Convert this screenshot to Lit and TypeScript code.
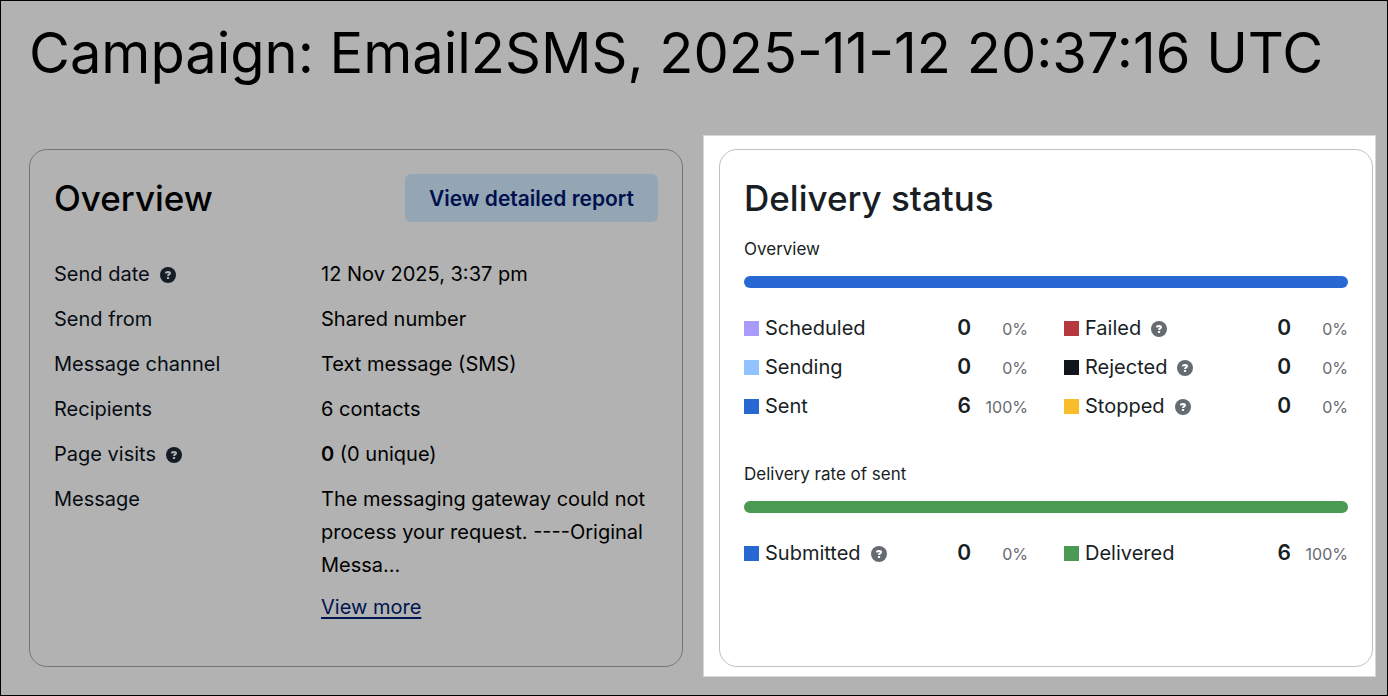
import { LitElement, html, css } from "lit";
import { customElement, property } from "lit/decorators.js";
import { styleMap } from "lit/directives/style-map.js";

interface Stat {
  label: string;
  color: string;
  count: number;
  percent: number;
  help?: string;
}

const OVERVIEW: Stat[] = [
  { label: "Scheduled", color: "#a89bfb", count: 0, percent: 0 },
  { label: "Failed", color: "#b5383e", count: 0, percent: 0, help: "About failed messages" },
  { label: "Sending", color: "#90c3ff", count: 0, percent: 0 },
  { label: "Rejected", color: "#12161c", count: 0, percent: 0, help: "About rejected messages" },
  { label: "Sent", color: "#2868d2", count: 6, percent: 100 },
  { label: "Stopped", color: "#f9bd2b", count: 0, percent: 0, help: "About stopped messages" },
];

const DELIVERY: Stat[] = [
  { label: "Submitted", color: "#2868d2", count: 0, percent: 0, help: "About submitted messages" },
  { label: "Delivered", color: "#4b9a53", count: 6, percent: 100 },
];

@customElement("help-tip")
export class HelpTip extends LitElement {
  @property() label = "Help";

  static styles = css`
    :host {
      display: inline-flex;
      color: #666b71;
    }
    .tip {
      display: flex;
      padding: 0;
      border: 0;
      background: none;
      color: inherit;
      cursor: pointer;
    }
    .mark {
      fill: none;
      stroke: var(--tip-mark, #fff);
      stroke-width: 2;
      stroke-linejoin: round;
    }
    .dot {
      fill: var(--tip-mark, #fff);
    }
  `;

  render() {
    return html`
      <button class="tip" type="button" aria-label=${this.label}>
        <svg width="16" height="16" viewBox="0 0 16 16" aria-hidden="true">
          <circle cx="8" cy="8" r="8" fill="currentColor" />
          <path class="mark" d="M5.8 6.3C5.9 5.2 6.8 4.9 8 4.9c1.2 0 2 .5 2 1.3 0 1.3-2 1.2-2 2.9" />
          <rect class="dot" x="6.9" y="10" width="2.2" height="2" rx=".4" />
        </svg>
      </button>
    `;
  }
}

@customElement("status-group")
export class StatusGroup extends LitElement {
  @property() heading = "";
  @property({ attribute: false }) stats: Stat[] = [];

  static styles = css`
    :host {
      display: block;
    }
    .heading {
      margin: 0 0 14px;
      font-size: 17px;
      font-weight: 400;
      line-height: 26px;
    }
    .bar {
      display: flex;
      height: 12px;
      overflow: hidden;
      border-radius: 6px;
      background: #e3e6e9;
    }
    .stats {
      display: grid;
      grid-template-columns: 1fr 1fr;
      column-gap: 36px;
      row-gap: 6px;
      margin: 0;
      padding: 24px 0 0;
    }
    .stat {
      display: flex;
      align-items: center;
      line-height: 33px;
    }
    .swatch {
      width: 15px;
      height: 15px;
      margin-right: 6px;
    }
    .label {
      display: flex;
      flex: 1;
      align-items: center;
    }
    .tip {
      margin-left: 10px;
    }
    .value {
      display: flex;
      align-items: baseline;
      margin: 0;
      line-height: 24px;
    }
    .count {
      font-weight: 600;
      font-size: 21px;
    }
    .percent {
      width: 57px;
      color: #666b71;
      font-size: 16px;
      text-align: right;
    }
  `;

  render() {
    return html`
      <h3 class="heading">${this.heading}</h3>
      <div class="bar">
        ${this.stats.map(
          (s) => html`<span style=${styleMap({ width: `${s.percent}%`, background: s.color })}></span>`,
        )}
      </div>
      <dl class="stats">
        ${this.stats.map(
          (s) => html`
            <div class="stat">
              <span class="swatch" style=${styleMap({ background: s.color })}></span>
              <dt class="label">
                ${s.label}${s.help ? html`<help-tip class="tip" label=${s.help}></help-tip>` : null}
              </dt>
              <dd class="value">
                <span class="count">${s.count}</span>
                <span class="percent">${s.percent}%</span>
              </dd>
            </div>
          `,
        )}
      </dl>
    `;
  }
}

@customElement("app-root")
export class AppRoot extends LitElement {
  static styles = css`
    :host {
      display: block;
      box-sizing: border-box;
      min-height: 100vh;
      padding: 10px 14px 28px 28px;
      border: 1px solid #000;
      background: #b2b2b2;
      color: #000;
      font: 400 20px/33px Inter, "Open Sans", sans-serif;
    }
    .title {
      margin: 0 0 54px;
      font-size: 56px;
      font-weight: 400;
      line-height: 84px;
    }
    .cards {
      display: grid;
      grid-template-columns: 1fr 1fr;
      gap: 36px;
      isolation: isolate;
    }
    .card {
      padding: 24px 24px 42px;
      border: 1px solid #6e767d;
      border-radius: 18px;
    }
    .spotlight {
      position: relative;
      border-color: #b9c1c9;
      color: #181e24;
    }
    .spotlight::before {
      content: "";
      position: absolute;
      z-index: -1;
      inset: -15px -4px -11px -17px;
      border: 1px solid #d6d6d6;
      background: #fff;
    }
    .head {
      display: flex;
      align-items: center;
      justify-content: space-between;
      min-height: 48px;
    }
    .heading {
      margin: 0;
      font-size: 35px;
      font-weight: 500;
      line-height: 48px;
    }
    .report {
      height: 48px;
      padding: 0 24px;
      border: 0;
      border-radius: 6px;
      background: #94a6b4;
      color: #00104f;
      font: inherit;
      font-size: 21px;
      font-weight: 600;
      cursor: pointer;
    }
    .facts {
      display: grid;
      grid-template-columns: 267fr 337fr;
      row-gap: 12px;
      margin: 36px 0 0;
    }
    .term {
      display: flex;
      align-items: center;
      align-self: start;
      color: #060c12;
    }
    .tip {
      --tip-mark: #b2b2b2;
      margin-left: 10px;
      color: #141d25;
    }
    .fact {
      margin: 0;
    }
    .message {
      margin: 0 0 9px;
    }
    .more {
      color: #00144f;
      text-decoration-thickness: 2px;
      text-underline-offset: 3px;
    }
    .count {
      font-weight: 600;
    }
    .status {
      margin-top: 14px;
    }
    .status + .status {
      margin-top: 38px;
    }
  `;

  render() {
    return html`
      <h1 class="title">Campaign: Email2SMS, 2025-11-12 20:37:16 UTC</h1>
      <main class="cards">
        <section class="card">
          <header class="head">
            <h2 class="heading">Overview</h2>
            <button class="report" type="button">View detailed report</button>
          </header>
          <dl class="facts">
            <dt class="term">Send date<help-tip class="tip" label="About the send date"></help-tip></dt>
            <dd class="fact">12 Nov 2025, 3:37 pm</dd>
            <dt class="term">Send from</dt>
            <dd class="fact">Shared number</dd>
            <dt class="term">Message channel</dt>
            <dd class="fact">Text message (SMS)</dd>
            <dt class="term">Recipients</dt>
            <dd class="fact">6 contacts</dd>
            <dt class="term">Page visits<help-tip class="tip" label="About page visits"></help-tip></dt>
            <dd class="fact"><b class="count">0</b> (0 unique)</dd>
            <dt class="term">Message</dt>
            <dd class="fact">
              <p class="message">The messaging gateway could not process your request. ----Original Messa...</p>
              <a class="more" href="#message">View more</a>
            </dd>
          </dl>
        </section>
        <section class="card spotlight">
          <header class="head"><h2 class="heading">Delivery status</h2></header>
          <status-group class="status" heading="Overview" .stats=${OVERVIEW}></status-group>
          <status-group class="status" heading="Delivery rate of sent" .stats=${DELIVERY}></status-group>
        </section>
      </main>
    `;
  }
}
